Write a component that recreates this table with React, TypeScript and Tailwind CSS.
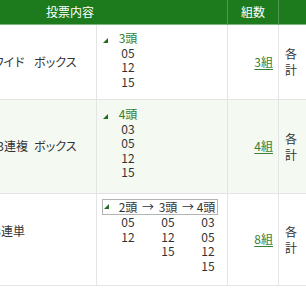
import React from 'react';

const Tri = () => (
  <svg width="5" height="5" viewBox="0 0 5 5" className="block">
    <polygon points="5,0 5,5 0,5" fill="#1f6f1f" />
  </svg>
);

const NumCol = ({ items, w }: { items: string[]; w: string }) => (
  <div className={`flex flex-col items-center ${w}`}>
    {items.map((n, i) => (
      <span key={i}>{n}</span>
    ))}
  </div>
);

const BoxCell = ({ head, nums }: { head: string; nums: string[] }) => (
  <div className="pl-[6px]">
    <div className="flex items-end">
      <div className="w-[12px] pb-[3px]">
        <Tri />
      </div>
      <div className="w-[26px] text-center text-[#2f7f2f]">{head}</div>
    </div>
    <div className="flex">
      <div className="w-[12px]" />
      <NumCol items={nums} w="w-[26px]" />
    </div>
  </div>
);

const Label = ({ name, w, gap, kana }: { name: string; w: string; gap: string; kana?: boolean }) => (
  <div className="flex items-center">
    <span className={`inline-block text-right ${w} ${kana ? 'tracking-[-1.5px]' : ''}`}>{name}</span>
    <span className={`${gap} tracking-[-1.5px]`}>ボックス</span>
  </div>
);

const Link = ({ children }: { children: React.ReactNode }) => (
  <a href="#" className="text-[#3b7f3b] underline underline-offset-2">
    {children}
  </a>
);

const Each = () => (
  <div className="flex flex-col leading-[16px] pl-[6px]">
    <span>各</span>
    <span>計</span>
  </div>
);

export default function App() {
  const cell = 'border-r border-b border-[#e4e4e4]';
  return (
    <div className="w-[306px] h-[306px] overflow-hidden bg-white font-['Noto_Sans_CJK_JP',sans-serif] text-[12px] leading-[14.5px] text-[#333]">
      <div className="ml-[-87px] w-[620px] grid grid-cols-[184px_131px_51px_254px]">
        {/* header */}
        <div className="col-span-2 h-[25px] bg-[#1d7a1d] border-b border-r border-b-[#7fb57f] border-r-[#4c984c] flex items-center justify-center text-white">
          投票内容
        </div>
        <div className="h-[25px] bg-[#1d7a1d] border-b border-r border-b-[#7fb57f] border-r-[#4c984c] flex items-center justify-center text-white">
          組数
        </div>
        <div className="h-[25px] bg-[#1d7a1d] border-b border-b-[#7fb57f]" />

        {/* row 1 */}
        <div className={`${cell} h-[75px] flex items-center`}>
          <Label name="ワイド" w="w-[111px]" gap="ml-[10px]" kana />
        </div>
        <div className={`${cell} pt-[6px]`}>
          <BoxCell head="3頭" nums={['05', '12', '15']} />
        </div>
        <div className={`${cell} flex items-center justify-end pr-[5px]`}>
          <Link>3組</Link>
        </div>
        <div className="border-b border-[#e4e4e4] flex items-center">
          <Each />
        </div>

        {/* row 2 */}
        <div className={`${cell} h-[94px] flex items-center bg-[#f4f9f2]`}>
          <Label name="3連複" w="w-[115px]" gap="ml-[6px]" />
        </div>
        <div className={`${cell} pt-[7px] bg-[#f4f9f2]`}>
          <BoxCell head="4頭" nums={['03', '05', '12', '15']} />
        </div>
        <div className={`${cell} flex items-center justify-end pr-[5px] bg-[#f4f9f2]`}>
          <Link>4組</Link>
        </div>
        <div className="border-b border-[#e4e4e4] flex items-center bg-[#f4f9f2]">
          <Each />
        </div>

        {/* row 3 */}
        <div className={`${cell} h-[92px] flex items-center pb-[16px]`}>
          <span className="inline-block w-[112px] text-right">3連単</span>
        </div>
        <div className={`${cell} pt-[5px] pl-[5px]`}>
          <div className="w-[116px] border border-[#b4b4b4] flex items-center h-[16px]">
            <div className="w-[12px] pl-[1px] self-end pb-[5px]">
              <Tri />
            </div>
            <div className="w-[26px] text-center">2頭</div>
            <div className="w-[14px] text-center">→</div>
            <div className="w-[26px] text-center">3頭</div>
            <div className="w-[14px] text-center">→</div>
            <div className="w-[22px] text-center">4頭</div>
          </div>
          <div className="flex pl-[13px]">
            <NumCol items={['05', '12']} w="w-[26px]" />
            <div className="w-[14px]" />
            <NumCol items={['05', '12', '15']} w="w-[26px]" />
            <div className="w-[14px]" />
            <NumCol items={['03', '05', '12', '15']} w="w-[26px]" />
          </div>
        </div>
        <div className={`${cell} flex items-center justify-end pr-[5px]`}>
          <Link>8組</Link>
        </div>
        <div className="border-b border-[#e4e4e4] flex items-center">
          <Each />
        </div>
      </div>
    </div>
  );
}
